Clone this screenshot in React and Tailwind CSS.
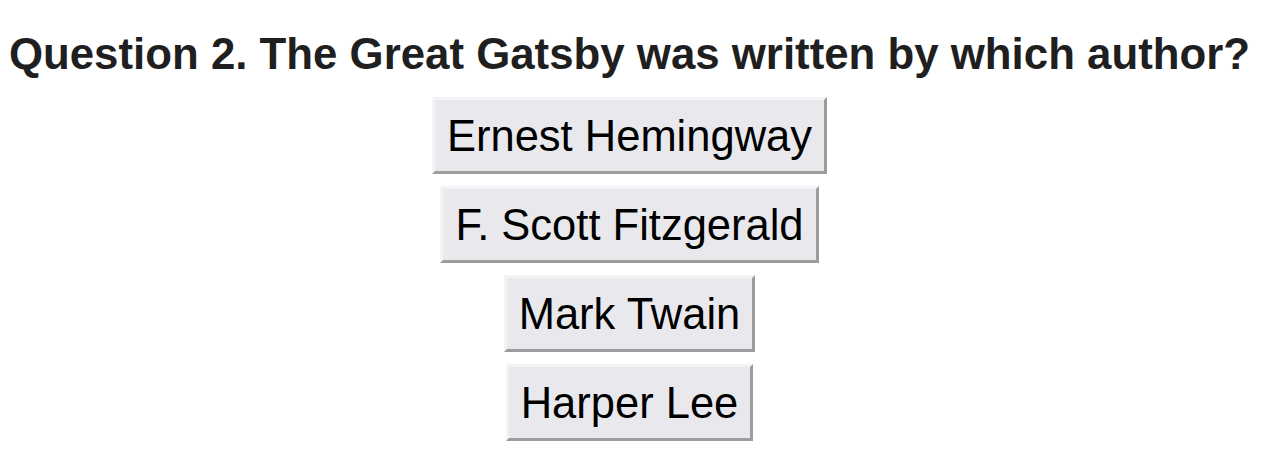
export default function App() {
  const answers = ["Ernest Hemingway", "F. Scott Fitzgerald", "Mark Twain", "Harper Lee"];
  return (
    <div className="w-[1259px] pt-[29px] flex flex-col items-center bg-white" style={{ fontFamily: '"Liberation Sans", Arial, sans-serif' }}>
      <h2 className="text-[43.8px] leading-[50px] font-bold text-[#1f1f1f] whitespace-nowrap">
        Question 2. The Great Gatsby was written by which author?
      </h2>
      <div className="mt-[18px] flex flex-col items-center gap-[12px]">
        {answers.map((a) => (
          <button
            key={a}
            className="h-[77px] px-[12px] text-[43.5px] leading-[50px] text-black bg-[#e9e9ed] border-[3px] border-t-[#f4f4f6] border-l-[#f4f4f6] border-r-[#9c9c9c] border-b-[#9c9c9c] whitespace-nowrap"
          >
            {a}
          </button>
        ))}
      </div>
    </div>
  );
}
